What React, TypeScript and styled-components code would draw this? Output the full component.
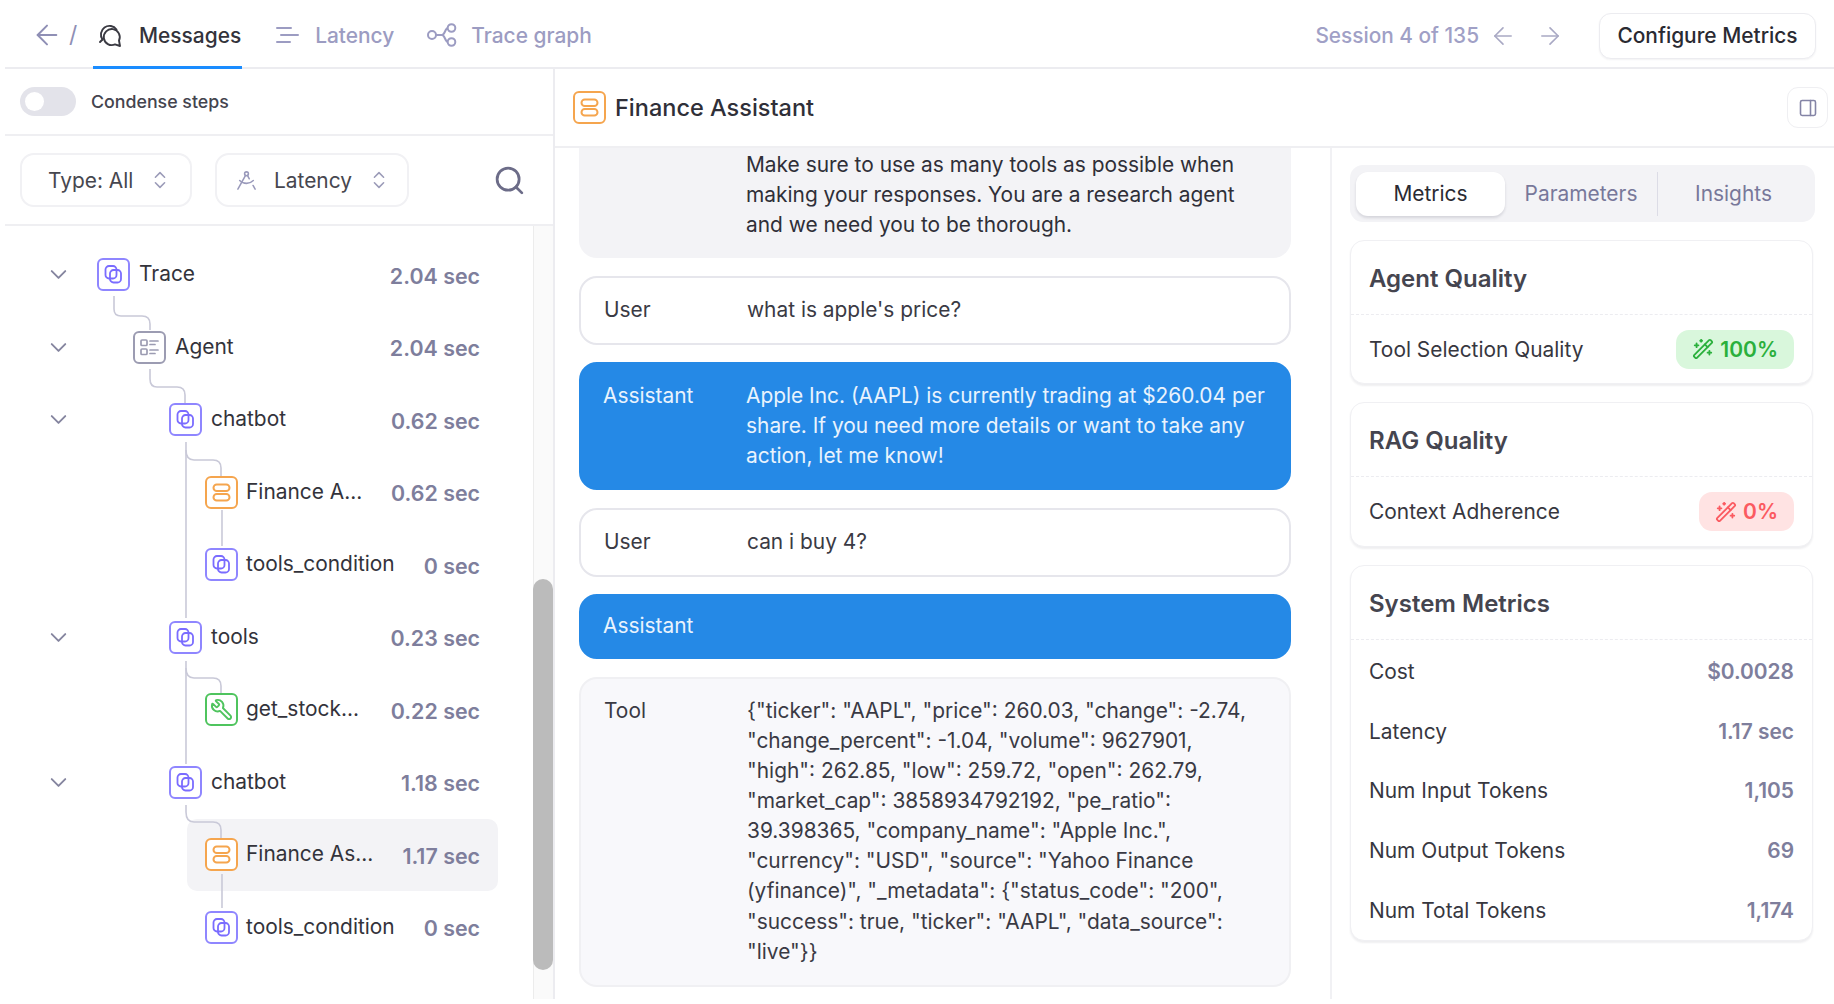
import React from "react";
import styled, { createGlobalStyle } from "styled-components";
import {
  ArrowLeft,
  ArrowRight,
  ChevronDown,
  ChevronsUpDown,
  DraftingCompass,
  PanelRight,
  Search,
  WandSparkles,
  Wrench,
} from "lucide-react";

const Global = createGlobalStyle`
  html, body { margin: 0; padding: 0; background: #fff; }
  body { font-family: Inter, "Liberation Sans", sans-serif; color: #2a2a32; }
  * { box-sizing: border-box; }
`;

const Page = styled.div`
  width: 1834px;
  height: 1004px;
  padding: 0 0 5px 5px;
  display: flex;
  flex-direction: column;
  overflow: hidden;
  font-size: 20.9px;
`;

const TopBar = styled.header`
  height: 69px;
  flex: none;
  display: flex;
  align-items: stretch;
  padding: 0 18px 0 26px;
  border-bottom: 2px solid #ececf0;
`;

const BackGroup = styled.div`
  display: flex;
  align-items: center;
  gap: 6px;
  width: 62px;
  padding-top: 3px;
  color: #8f8fb5;
  font-size: 23px;
`;

const NavTab = styled.div<{ $active?: boolean; $gap?: number }>`
  display: flex;
  align-items: center;
  gap: ${(p) => p.$gap ?? 16}px;
  height: 69px;
  padding: 4px 1px 0 4px;
  margin-right: 28px;
  font-size: 20.9px;
  font-weight: 500;
  color: ${(p) => (p.$active ? "#33333b" : "#9c9cc2")};
  border-bottom: 3px solid ${(p) => (p.$active ? "#1a8cff" : "transparent")};
`;

const SessionGroup = styled.div`
  margin-left: auto;
  padding-top: 4px;
  display: flex;
  align-items: center;
  color: #a0a0c6;
  font-size: 20.8px;
  font-weight: 500;
`;

const SessionArrows = styled.span`
  display: flex;
  gap: 19px;
  margin: 0 35px 0 10px;
  color: #a9a9c4;
`;

const ConfigureButton = styled.button`
  width: 217px;
  height: 46px;
  border: 1.5px solid #ececf0;
  border-radius: 12px;
  background: #fff;
  font: 500 20.9px Inter, sans-serif;
  color: #2a2a32;
  box-shadow: 0 1px 2px rgba(30, 30, 60, 0.06);
`;

const Main = styled.div`
  flex: 1;
  min-height: 0;
  display: flex;
`;

const LeftPanel = styled.aside`
  width: 550px;
  flex: none;
  display: flex;
  flex-direction: column;
  border-right: 2px solid #ececf0;
`;

const CondenseRow = styled.div`
  height: 67px;
  flex: none;
  display: flex;
  align-items: center;
  gap: 15px;
  padding-left: 15px;
  border-bottom: 2px solid #efeff2;
  font-size: 17.8px;
  font-weight: 500;
  color: #44444e;
`;

const Toggle = styled.span`
  width: 56px;
  height: 29px;
  border-radius: 15px;
  background: #e3e3ea;
  display: flex;
  align-items: center;
  padding-left: 5px;
  &::after {
    content: "";
    width: 19px;
    height: 19px;
    border-radius: 50%;
    background: #fff;
  }
`;

const FilterRow = styled.div`
  height: 90px;
  flex: none;
  display: flex;
  align-items: center;
  padding: 0 27px 0 15px;
  border-bottom: 2px solid #efeff2;
`;

const SelectBox = styled.div<{ $w: number; $pad: number }>`
  width: ${(p) => p.$w}px;
  height: 54px;
  margin-right: 23px;
  display: flex;
  align-items: center;
  gap: 16px;
  padding-left: ${(p) => p.$pad}px;
  border: 2px solid #f1f1f4;
  border-radius: 14px;
  color: #47474f;
  font-size: 20.9px;
`;

const SelectArrows = styled(ChevronsUpDown)`
  color: #9b9bb8;
  flex: none;
`;

const SearchButton = styled.span`
  margin-left: auto;
  display: flex;
  color: #6c6c88;
`;

const TreeArea = styled.div`
  flex: 1;
  min-height: 0;
  display: flex;
`;

const Tree = styled.div`
  position: relative;
  flex: 1;
  padding-top: 12.25px;
`;

const Connectors = styled.svg`
  position: absolute;
  left: 0;
  top: 0;
  width: 528px;
  height: 774px;
  pointer-events: none;
  z-index: 1;
`;

const Row = styled.div`
  height: 72.55px;
  display: flex;
  align-items: center;
  padding-left: 45px;
`;

const Chevron = styled.span`
  width: 16px;
  height: 16px;
  flex: none;
  display: flex;
  align-items: center;
  justify-content: center;
  color: #85859f;
  svg {
    flex: none;
  }
`;

const RowBody = styled.div<{ $depth: number; $selected?: boolean }>`
  flex: 1;
  height: 72.55px;
  display: flex;
  align-items: center;
  gap: ${(p) => (p.$depth === 3 ? 8 : 9)}px;
  margin-left: ${(p) => [13, 49, 85, 121][p.$depth]}px;
  margin-right: 35px;
  padding: 0 18px 0 18px;
  border-radius: 10px;
  background: ${(p) => (p.$selected ? "#f3f3f6" : "transparent")};
`;

const IconBox = styled.span<{ $color: string }>`
  width: 33px;
  height: 33px;
  flex: none;
  display: flex;
  align-items: center;
  justify-content: center;
  background: #fff;
  border: 2px solid ${(p) => p.$color};
  border-radius: 6px;
  color: ${(p) => p.$color};
  position: relative;
  z-index: 2;
`;

const RowLabel = styled.span`
  flex: 1;
  margin-top: -2px;
  font-size: 20.9px;
  color: #33333b;
  white-space: nowrap;
`;

const RowTime = styled.span`
  margin-top: 2px;
  font-size: 21.4px;
  font-weight: 600;
  color: #7e7e9c;
  white-space: nowrap;
`;

const ScrollTrack = styled.div`
  width: 20px;
  flex: none;
  background: #fafafa;
  border-left: 1px solid #ececec;
`;

const ScrollThumb = styled.div`
  width: 20px;
  height: 391px;
  margin-top: 353px;
  margin-left: -1px;
  border-radius: 10px;
  background: #bbbbbb;
`;

const RightPanel = styled.section`
  flex: 1;
  min-width: 0;
  display: flex;
  flex-direction: column;
`;

const PaneHeader = styled.div`
  height: 79px;
  flex: none;
  display: flex;
  align-items: center;
  gap: 9px;
  padding: 0 6px 0 18px;
  border-bottom: 2px solid #efeff2;
  font-size: 23.5px;
  font-weight: 500;
  color: #2f2f38;
`;

const PanelButton = styled.span`
  margin-left: auto;
  width: 41px;
  height: 41px;
  display: flex;
  align-items: center;
  justify-content: center;
  border: 1.5px solid #efeff2;
  border-radius: 11px;
  color: #8484a6;
`;

const PaneBody = styled.div`
  flex: 1;
  min-height: 0;
  display: flex;
`;

const MessageColumn = styled.div`
  width: 777px;
  flex: none;
  display: flex;
  flex-direction: column;
  gap: 17.5px;
  padding: 0 39px 0 24px;
  border-right: 2px solid #f1f1f4;
  overflow: hidden;
`;

const tones = {
  system: { bg: "#f3f3f6", border: "#f3f3f6", fg: "#2f2f38", left: 22, right: 24 },
  user: { bg: "#ffffff", border: "#e6e6ec", fg: "#3a3a44", left: 23, right: 24 },
  assistant: { bg: "#2589e6", border: "#2589e6", fg: "#e9f3fd", left: 22, right: 16 },
  tool: { bg: "#f8f8fb", border: "#f0f0f3", fg: "#3a3a44", left: 23, right: 24 },
};

const Bubble = styled.div<{ $tone: keyof typeof tones; $h: number; $top?: number; $clipped?: boolean }>`
  height: ${(p) => p.$h}px;
  flex: none;
  display: grid;
  grid-template-columns: 143px 1fr;
  padding: ${(p) => p.$top ?? 17}px ${(p) => tones[p.$tone].right}px 0 ${(p) => tones[p.$tone].left}px;
  border: 2px solid ${(p) => tones[p.$tone].border};
  border-radius: ${(p) => (p.$clipped ? "0 0 18px 18px" : "18px")};
  border-top-width: ${(p) => (p.$clipped ? 0 : 2)}px;
  background: ${(p) => tones[p.$tone].bg};
  color: ${(p) => tones[p.$tone].fg};
  font-size: 20.9px;
  line-height: 30.15px;
`;

const SideColumn = styled.div`
  flex: 1;
  min-width: 0;
  display: flex;
  flex-direction: column;
  gap: 18px;
  padding: 17px 19px 0 18px;
`;

const TabStrip = styled.div`
  height: 57px;
  flex: none;
  display: flex;
  align-items: center;
  padding: 0 6px;
  background: #f3f3f6;
  border-radius: 13px;
`;

const SideTab = styled.div<{ $active?: boolean; $w: number; $rule?: boolean }>`
  width: ${(p) => p.$w}px;
  height: 44px;
  display: flex;
  align-items: center;
  justify-content: center;
  border-radius: ${(p) => (p.$rule ? 0 : 12)}px;
  font-size: 20.9px;
  font-weight: 400;
  color: ${(p) => (p.$active ? "#2a2a32" : "#78789a")};
  background: ${(p) => (p.$active ? "#fff" : "transparent")};
  box-shadow: ${(p) => (p.$active ? "0 2px 3px rgba(30,30,60,.14)" : "none")};
  border-right: ${(p) => (p.$rule ? "1.5px solid #dcdce6" : "none")};
`;

const Card = styled.div`
  width: 463px;
  flex: none;
  border: 1.5px solid #f0f0f3;
  border-radius: 14px;
  background: #fff;
  box-shadow: 0 2px 2px rgba(30, 30, 60, 0.07);
`;

const CardTitle = styled.div`
  height: 74px;
  display: flex;
  align-items: center;
  padding: 2px 0 0 18px;
  border-bottom: 1.5px dashed #ececf0;
  font-size: 24px;
  font-weight: 600;
  color: #45454f;
`;

const SystemRows = styled.div`
  padding-top: 2px;
`;

const MetricRow = styled.div<{ $h: number }>`
  height: ${(p) => p.$h}px;
  display: flex;
  align-items: center;
  justify-content: space-between;
  padding: 0 18px;
  font-size: 20.9px;
  color: #37373f;
`;

const MetricValue = styled.span`
  font-weight: 600;
  color: #7e7e9c;
`;

const Badge = styled.span<{ $bad?: boolean }>`
  height: 39px;
  display: flex;
  align-items: center;
  gap: 6px;
  padding: 0 16px;
  border-radius: 13px;
  font-size: 21px;
  font-weight: 600;
  background: ${(p) => (p.$bad ? "#ffe3e3" : "#d9f7dc")};
  color: ${(p) => (p.$bad ? "#fb5a60" : "#2bb03c")};
`;

const StackGlyph = () => (
  <svg width="21" height="21" viewBox="0 0 21 21" fill="none" stroke="#7a6cff" strokeWidth="1.8">
    <rect x="2.5" y="2" width="11" height="12.5" rx="3.5" />
    <rect x="7" y="6" width="11" height="12.5" rx="3.5" />
  </svg>
);

const AgentGlyph = () => (
  <svg width="23" height="23" viewBox="0 0 23 23" fill="none" stroke="currentColor" strokeWidth="1.7" strokeLinecap="round">
    <rect x="3" y="4" width="6" height="5.5" rx="1" />
    <rect x="3" y="13" width="6" height="5.5" rx="1" />
    <path d="M12 5h8M12 8.5h5M12 14h8M12 17.5h5" />
  </svg>
);

const LlmGlyph = () => (
  <svg width="23" height="23" viewBox="0 0 23 23" fill="none" stroke="currentColor" strokeWidth="2">
    <rect x="3.5" y="3.5" width="16" height="6.5" rx="3.25" />
    <rect x="3.5" y="13" width="16" height="6.5" rx="3.25" />
  </svg>
);

const MessagesGlyph = () => (
  <svg width="26" height="26" viewBox="0 0 26 26" fill="none" stroke="#3a3a42" strokeWidth="1.9" strokeLinejoin="round" strokeLinecap="round">
    <path d="M5.5 17.5 A8.5 8.5 0 1 1 19.5 7.5" />
    <path d="M22 18.5 L23 24 L18 22.4 A8 8 0 1 1 22 18.5 Z" />
    <path d="M5.5 17.5 L3 20" />
  </svg>
);

const LatencyGlyph = () => (
  <svg width="25" height="18" viewBox="0 0 25 18" fill="none" stroke="#9c9cc2" strokeWidth="2" strokeLinecap="round">
    <path d="M3 2h14M7 9h17M3 16h13" />
  </svg>
);

const GraphGlyph = () => (
  <svg width="30" height="24" viewBox="0 0 30 24" fill="none" stroke="#9c9cc2" strokeWidth="2">
    <circle cx="5" cy="12" r="4" />
    <circle cx="24.5" cy="5" r="3.8" />
    <circle cx="24.5" cy="19" r="3.8" />
    <path d="M9 12h6c3 0 3-7 6-7M15 12c3 0 3 7 6 7" />
  </svg>
);

const tree: { depth: number; label: string; time: string; kind: "stack" | "agent" | "llm" | "tool"; chevron?: boolean; selected?: boolean }[] = [
  { depth: 0, label: "Trace", time: "2.04 sec", kind: "stack", chevron: true },
  { depth: 1, label: "Agent", time: "2.04 sec", kind: "agent", chevron: true },
  { depth: 2, label: "chatbot", time: "0.62 sec", kind: "stack", chevron: true },
  { depth: 3, label: "Finance A...", time: "0.62 sec", kind: "llm" },
  { depth: 3, label: "tools_condition", time: "0 sec", kind: "stack" },
  { depth: 2, label: "tools", time: "0.23 sec", kind: "stack", chevron: true },
  { depth: 3, label: "get_stock...", time: "0.22 sec", kind: "tool" },
  { depth: 2, label: "chatbot", time: "1.18 sec", kind: "stack", chevron: true },
  { depth: 3, label: "Finance As...", time: "1.17 sec", kind: "llm", selected: true },
  { depth: 3, label: "tools_condition", time: "0 sec", kind: "stack" },
];

const kindColor = { stack: "#8f86ff", agent: "#9c9cb2", llm: "#f5a54e", tool: "#4fc45e" };

const KindIcon = ({ kind }: { kind: keyof typeof kindColor }) => (
  <IconBox $color={kindColor[kind]}>
    {kind === "stack" && <StackGlyph />}
    {kind === "agent" && <AgentGlyph />}
    {kind === "llm" && <LlmGlyph />}
    {kind === "tool" && <Wrench size={23} strokeWidth={2} style={{ transform: "scaleX(-1)" }} />}
  </IconBox>
);

const systemMetrics = [
  ["Cost", "$0.0028"],
  ["Latency", "1.17 sec"],
  ["Num Input Tokens", "1,105"],
  ["Num Output Tokens", "69"],
  ["Num Total Tokens", "1,174"],
];

export default function App() {
  return (
    <Page>
      <Global />
      <TopBar>
        <BackGroup>
          <ArrowLeft size={32} strokeWidth={1.5} />
          <span>/</span>
        </BackGroup>
        <NavTab $active>
          <MessagesGlyph />
          Messages
        </NavTab>
        <NavTab>
          <LatencyGlyph />
          Latency
        </NavTab>
        <NavTab $gap={14}>
          <GraphGlyph />
          Trace graph
        </NavTab>
        <SessionGroup>
          Session 4 of 135
          <SessionArrows>
            <ArrowLeft size={28} strokeWidth={1.4} />
            <ArrowRight size={28} strokeWidth={1.4} />
          </SessionArrows>
          <ConfigureButton>Configure Metrics</ConfigureButton>
        </SessionGroup>
      </TopBar>
      <Main>
        <LeftPanel>
          <CondenseRow>
            <Toggle />
            Condense steps
          </CondenseRow>
          <FilterRow>
            <SelectBox $w={172} $pad={26}>
              Type: All
              <SelectArrows size={22} strokeWidth={1.7} />
            </SelectBox>
            <SelectBox $w={194} $pad={18}>
              <DraftingCompass size={23} strokeWidth={1.6} color="#9a9abb" />
              Latency
              <SelectArrows size={22} strokeWidth={1.7} />
            </SelectBox>
            <SearchButton>
              <Search size={33} strokeWidth={2} />
            </SearchButton>
          </FilterRow>
          <TreeArea>
            <Tree>
              <Connectors viewBox="0 0 528 774" fill="none" stroke="#c9c9d8" strokeWidth="1.6">
                <g transform="translate(-5 -226)">
                  <path d="M114 296V309Q114 316 121 316H142Q150 316 150 324V330" />
                  <path d="M150 369V379Q150 387 157 387H177Q185 387 185 395V403" />
                  <path d="M186 442V618" />
                  <path d="M186 450Q186 460 194 460H213Q221 460 221 468V476" />
                  <path d="M222 510V546" />
                  <path d="M186 661V764" />
                  <path d="M186 668Q186 678 194 678H213Q221 678 221 686V694" />
                  <path d="M186 805V812Q186 822 194 822H213Q221 822 221 830V839" />
                  <path d="M222 874V908" />
                </g>
              </Connectors>
              {tree.map((row, i) => (
                <Row key={i}>
                  <Chevron>{row.chevron && <ChevronDown size={27} strokeWidth={1.7} />}</Chevron>
                  <RowBody $depth={row.depth} $selected={row.selected}>
                    <KindIcon kind={row.kind} />
                    <RowLabel>{row.label}</RowLabel>
                    <RowTime>{row.time}</RowTime>
                  </RowBody>
                </Row>
              ))}
            </Tree>
            <ScrollTrack>
              <ScrollThumb />
            </ScrollTrack>
          </TreeArea>
        </LeftPanel>
        <RightPanel>
          <PaneHeader>
            <KindIcon kind="llm" />
            Finance Assistant
            <PanelButton>
              <PanelRight size={20} strokeWidth={1.9} />
            </PanelButton>
          </PaneHeader>
          <PaneBody>
            <MessageColumn>
              <Bubble $tone="system" $h={110} $top={2} $clipped>
                <span />
                <span>
                  Make sure to use as many tools as possible when making your responses. You are a research agent and we need you to be thorough.
                </span>
              </Bubble>
              <Bubble $tone="user" $h={69}>
                <span>User</span>
                <span>what is apple's price?</span>
              </Bubble>
              <Bubble $tone="assistant" $h={128}>
                <span>Assistant</span>
                <span>Apple Inc. (AAPL) is currently trading at $260.04 per share. If you need more details or want to take any action, let me know!</span>
              </Bubble>
              <Bubble $tone="user" $h={69}>
                <span>User</span>
                <span>can i buy 4?</span>
              </Bubble>
              <Bubble $tone="assistant" $h={65} $top={15}>
                <span>Assistant</span>
              </Bubble>
              <Bubble $tone="tool" $h={310}>
                <span>Tool</span>
                <span>
                  {`{"ticker": "AAPL", "price": 260.03, "change": -2.74, "change_percent": -1.04, "volume": 9627901, "high": 262.85, "low": 259.72, "open": 262.79, "market_cap": 3858934792192, "pe_ratio": 39.398365, "company_name": "Apple Inc.", "currency": "USD", "source": "Yahoo Finance (yfinance)", "_metadata": {"status_code": "200", "success": true, "ticker": "AAPL", "data_source": "live"}}`}
                </span>
              </Bubble>
            </MessageColumn>
            <SideColumn>
              <TabStrip>
                <SideTab $active $w={149}>Metrics</SideTab>
                <SideTab $w={153} $rule>Parameters</SideTab>
                <SideTab $w={151}>Insights</SideTab>
              </TabStrip>
              <Card>
                <CardTitle>Agent Quality</CardTitle>
                <MetricRow $h={68}>
                  Tool Selection Quality
                  <Badge>
                    <WandSparkles size={22} strokeWidth={2} />
                    100%
                  </Badge>
                </MetricRow>
              </Card>
              <Card>
                <CardTitle>RAG Quality</CardTitle>
                <MetricRow $h={69}>
                  Context Adherence
                  <Badge $bad>
                    <WandSparkles size={22} strokeWidth={2} />
                    0%
                  </Badge>
                </MetricRow>
              </Card>
              <Card>
                <CardTitle>System Metrics</CardTitle>
                <SystemRows>
                  {systemMetrics.map(([k, v]) => (
                    <MetricRow $h={59.6} key={k}>
                      {k}
                      <MetricValue>{v}</MetricValue>
                    </MetricRow>
                  ))}
                </SystemRows>
              </Card>
            </SideColumn>
          </PaneBody>
        </RightPanel>
      </Main>
    </Page>
  );
}
